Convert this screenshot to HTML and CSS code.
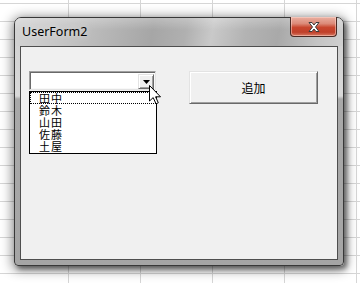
FILE: index.html
```html
<!DOCTYPE html>
<html lang="ja">
<head>
<meta charset="UTF-8">
<meta name="viewport" content="width=device-width, initial-scale=1.0">
<title>UserForm2</title>
<link rel="stylesheet" href="styles.css">
</head>
<body>

<div class="window">
  <div class="titlebar">
    <span class="title">UserForm2</span>
    <button class="close-btn">
      <svg width="12" height="10" viewBox="0 0 12 10">
        <path d="M1 0.5 H4 L6 3 L8 0.5 H11 L7.5 5 L11 9.5 H8 L6 7 L4 9.5 H1 L4.5 5 Z" fill="#fff" stroke="#3b3b3b" stroke-width="1"/>
      </svg>
    </button>
  </div>
  <div class="frame">
    <div class="client">
      <div class="combo">
        <div class="combo-field">
          <span class="combo-arrow">
            <svg width="7" height="4" viewBox="0 0 7 4"><path d="M0 0 H7 L3.5 4 Z" fill="#000"/></svg>
          </span>
        </div>
        <ul class="combo-list">
          <li class="combo-item focused">田中</li>
          <li class="combo-item">鈴木</li>
          <li class="combo-item">山田</li>
          <li class="combo-item">佐藤</li>
          <li class="combo-item">土屋</li>
        </ul>
        <svg class="cursor" width="13" height="20" viewBox="0 0 13 20">
          <path d="M0.5 0.5 V16 L4.2 12.6 L7 18.8 L9.3 17.8 L6.6 11.8 H11.5 Z" fill="#fff" stroke="#000" stroke-width="1" stroke-linejoin="miter"/>
        </svg>
      </div>
      <button class="add-btn">追加</button>
    </div>
  </div>
</div>

</body>
</html>
```

FILE: styles.css
```css
html, body {
  height: 283px;
  overflow: hidden;
}
body {
  margin: 0;
  padding: 0;
  font-family: "Noto Sans", "Liberation Sans", sans-serif;
  background-color: #fff;
  background-image:
    linear-gradient(to right, #d6d6d6 1px, transparent 1px),
    linear-gradient(to bottom, #d6d6d6 1px, transparent 1px);
  background-size: 72px 100%, 100% 18px;
  background-position: 68px 0, 0 3px;
}
.window {
  box-sizing: border-box;
  width: 330px;
  height: 249px;
  margin: 17px 0 0 14px;
  border: 1px solid #383838;
  border-radius: 7px 7px 4px 4px;
  display: flex;
  flex-direction: column;
  background: linear-gradient(180deg, #cfcfcf 0, #d9d9d9 78px, #a9a9a9 81px, #a5a5a5 100%);
  box-shadow: 0 2px 12px 2px rgba(0, 0, 0, 0.45), 3px 3px 5px rgba(0, 0, 0, 0.45);
}
.titlebar {
  height: 28px;
  display: flex;
  justify-content: space-between;
  align-items: flex-start;
  padding: 0 6px 0 7px;
  border-radius: 6px 6px 0 0;
  background:
    linear-gradient(180deg, rgba(255, 255, 255, 0.25) 0, rgba(255, 255, 255, 0) 12px),
    linear-gradient(100deg, #d3d3d3 0%, #c2c2c2 18%, #a6a6a6 42%, #b0b0b0 52%, #c9c9c9 60%, #b3b3b3 70%, #a9a9a9 80%, #c4c4c4 92%, #d0d0d0 100%);
}
.title {
  font-size: 12.5px;
  line-height: 28px;
  color: #000;
  text-shadow: 0 0 6px rgba(255, 255, 255, 0.7);
}
.close-btn {
  width: 47px;
  height: 20px;
  margin-top: -1px;
  padding: 0;
  border: 1px solid #4a2a24;
  border-top: none;
  border-radius: 0 0 4px 4px;
  background: linear-gradient(180deg, #eab0a2 0, #dc8a78 35%, #c8462e 55%, #c0402a 80%, #d67a64 100%);
  box-shadow: inset 0 0 0 1px rgba(255, 220, 210, 0.5);
  display: flex;
  align-items: center;
  justify-content: center;
}
.frame {
  flex: 1;
  display: flex;
  padding: 0 5px 5px 5px;
}
.client {
  flex: 1;
  display: flex;
  align-items: flex-start;
  gap: 33px;
  padding: 24px 0 0 8px;
  border: 1px solid #4e4e4e;
  background-color: #f0f0f0;
  font-family: "Noto Sans CJK JP", "Noto Sans", sans-serif;
  font-size: 12px;
}
.combo {
  position: relative;
  width: 127px;
}
.combo-field {
  box-sizing: border-box;
  height: 19px;
  background-color: #fff;
  border: 1px solid;
  border-color: #a0a0a0 #e3e3e3 #e3e3e3 #a0a0a0;
  box-shadow: inset 1px 1px 0 #696969, inset -1px -1px 0 #f8f8f8;
  display: flex;
  justify-content: flex-end;
  padding: 2px 1px 1px 0;
}
.combo-arrow {
  box-sizing: border-box;
  width: 16px;
  height: 15px;
  background-color: #f0f0f0;
  border: 1px solid;
  border-color: #e3e3e3 #696969 #696969 #e3e3e3;
  box-shadow: inset 1px 1px 0 #fff, inset -1px -1px 0 #a0a0a0;
  display: flex;
  align-items: center;
  justify-content: center;
}
.combo-list {
  position: absolute;
  left: 0;
  top: 20px;
  width: 128px;
  box-sizing: border-box;
  margin: 0;
  padding: 0 0 1px 0;
  list-style: none;
  background-color: #fff;
  border: 1px solid #000;
}
.combo-item {
  height: 12px;
  line-height: 12px;
  padding-left: 9px;
  font-size: 11px;
  letter-spacing: 1px;
  color: #000;
}
.combo-item.focused {
  outline: 1px dotted #000;
  outline-offset: -1px;
}
.cursor {
  position: absolute;
  left: 120px;
  top: 14px;
}
.add-btn {
  width: 129px;
  height: 33px;
  padding: 0;
  background-color: #f0f0f0;
  border: 1px solid;
  border-color: #e3e3e3 #696969 #696969 #e3e3e3;
  box-shadow: inset 1px 1px 0 #fff, inset -1px -1px 0 #a0a0a0;
  font-family: "Noto Sans CJK JP", "Noto Sans", sans-serif;
  font-size: 12px;
  color: #000;
}
```
